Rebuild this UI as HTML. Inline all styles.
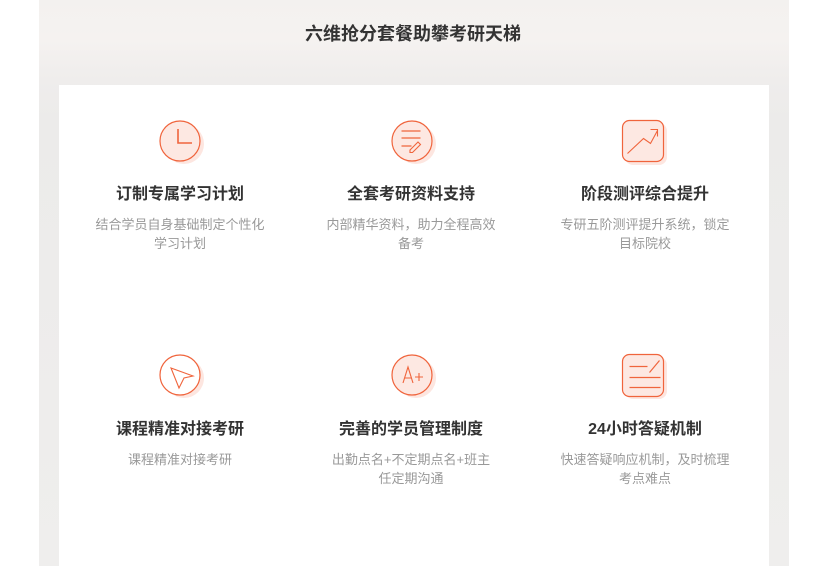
<!DOCTYPE html>
<html><head><meta charset="utf-8"><style>
*{margin:0;padding:0;box-sizing:border-box}
body{width:826px;height:566px;background:#fff;position:relative;overflow:hidden;font-family:"Liberation Sans","Noto Sans CJK SC",sans-serif}
.bg{position:absolute;left:39px;top:0;width:750px;height:566px;background:linear-gradient(180deg,#f3f1ef 0,#f5f2f0 40px,#efedec 80px,#ecebea 120px,#efeeed 566px)}
h1{position:absolute;top:20px;left:0;width:826px;text-align:center;font-size:18px;font-weight:bold;color:#333}
.card{position:absolute;left:59px;top:85px;width:710px;height:481px;background:#fff}
.ic{position:absolute}
.it{position:absolute;width:232px;text-align:center}
.it h3{font-size:16px;font-weight:bold;color:#333;line-height:20px}
.it p{font-size:13px;color:#999;line-height:19px;margin:10px auto 0;width:175px}
</style></head><body>
<div class="bg"></div>
<h1>六维抢分套餐助攀考研天梯</h1>
<div class="card"></div>

<svg class="ic" style="left:158px;top:119px" width="50" height="50" viewBox="0 0 50 50"><circle cx="26" cy="25" r="20" fill="#fde6e0"/><circle cx="22" cy="22" r="20" fill="#fde8e2" stroke="#f0643c" stroke-width="1.2"/><path d="M20 10V24H34" fill="none" stroke="#f0643c" stroke-width="1.6"/></svg>
<svg class="ic" style="left:389.5px;top:119px" width="50" height="50" viewBox="0 0 50 50"><circle cx="26" cy="25" r="20" fill="#fde6e0"/><circle cx="22" cy="22" r="20" fill="#fde8e2" stroke="#f0643c" stroke-width="1.2"/><path d="M11.5 12H30.5M11.5 19H30.5M11.5 27H21.5" stroke="#f0643c" stroke-width="1.2"/><path d="M20 31l8-8 2.5 2.5-8 8h-2.5z" fill="none" stroke="#f0643c" stroke-width="1.1"/></svg>
<svg class="ic" style="left:620.5px;top:118.5px" width="50" height="50" viewBox="0 0 50 50"><rect x="4" y="4" width="42" height="42" rx="8" fill="#fde6e0"/><rect x="1.5" y="1.5" width="41" height="41" rx="7" fill="#fde8e2" stroke="#f0643c" stroke-width="1.2"/><path d="M6.5 34.5L22.5 19.5L29.5 24.5L36.5 11.5M29.5 10.5H36.5V17.5" fill="none" stroke="#f0643c" stroke-width="1.1"/></svg>

<svg class="ic" style="left:158px;top:353px" width="50" height="50" viewBox="0 0 50 50"><circle cx="26" cy="25" r="20" fill="#fde6e0"/><circle cx="22" cy="22" r="20" fill="#fff" stroke="#f0643c" stroke-width="1.2"/><path d="M13 15L35 23L26 25L21 35Z" fill="none" stroke="#f0643c" stroke-width="1.1"/></svg>
<svg class="ic" style="left:389.5px;top:353px" width="50" height="50" viewBox="0 0 50 50"><circle cx="26" cy="25" r="20" fill="#fde6e0"/><circle cx="22" cy="22" r="20" fill="#fde8e2" stroke="#f0643c" stroke-width="1.2"/><path d="M13 30L18 14L23 30M14.5 25H21.5M25 24H33M29 20V28" fill="none" stroke="#f0643c" stroke-width="1.1"/></svg>
<svg class="ic" style="left:620.5px;top:352.5px" width="50" height="50" viewBox="0 0 50 50"><rect x="4" y="4" width="42" height="42" rx="8" fill="#fde6e0"/><rect x="1.5" y="1.5" width="41" height="42" rx="7" fill="#fde8e2" stroke="#f0643c" stroke-width="1.2"/><path d="M8.5 13.5H26.5M28.5 19.5L38.5 7.5M8.5 24.5H39.5M8.5 34.5H39.5" fill="none" stroke="#f0643c" stroke-width="1.2"/></svg>

<div class="it" style="left:64px;top:185px"><h3>订制专属学习计划</h3><p>结合学员自身基础制定个性化学习计划</p></div>
<div class="it" style="left:295px;top:185px"><h3>全套考研资料支持</h3><p>内部精华资料，助力全程高效备考</p></div>
<div class="it" style="left:529px;top:185px"><h3>阶段测评综合提升</h3><p>专研五阶测评提升系统，锁定目标院校</p></div>
<div class="it" style="left:64px;top:420px"><h3>课程精准对接考研</h3><p>课程精准对接考研</p></div>
<div class="it" style="left:295px;top:420px"><h3>完善的学员管理制度</h3><p style="width:168px">出勤点名+不定期点名+班主任定期沟通</p></div>
<div class="it" style="left:529px;top:420px"><h3>24小时答疑机制</h3><p>快速答疑响应机制，及时梳理考点难点</p></div>
</body></html>
